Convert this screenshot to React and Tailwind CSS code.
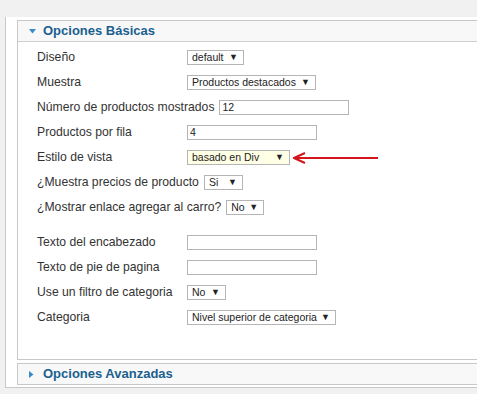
import React from "react";

const rows1 = [
  { label: "Diseño", type: "select", value: "default", w: "w-[57px]" },
  { label: "Muestra", type: "select", value: "Productos destacados", w: "w-[129px]" },
  { label: "Número de productos mostrados", type: "input", value: "12" },
  { label: "Productos por fila", type: "input", value: "4" },
  { label: "Estilo de vista", type: "select", value: "basado en Div", w: "w-[103px]", hl: true, arrow: true },
  { label: "¿Muestra precios de producto", type: "select", value: "Si", w: "w-[39px]" },
  { label: "¿Mostrar enlace agregar al carro?", type: "select", value: "No", w: "w-[38px]" },
];

const rows2 = [
  { label: "Texto del encabezado", type: "input", value: "" },
  { label: "Texto de pie de pagina", type: "input", value: "" },
  { label: "Use un filtro de categoria", type: "select", value: "No", w: "w-[39px]" },
  { label: "Categoria", type: "select", value: "Nivel superior de categoria", w: "w-[149px]" },
];

function Select({ value, w, hl }) {
  return (
    <div
      className={`${w} h-[15px] border border-[#b5b5b5] ${hl ? "bg-[#ffffe6]" : "bg-white"} flex items-center justify-between pl-[4px] pr-[5px] text-[10.5px] text-[#222] leading-none whitespace-nowrap`}
    >
      <span>{value}</span>
      <span className="text-[9px]">▼</span>
    </div>
  );
}

function Input({ value }) {
  return (
    <div className="w-[130px] h-[15px] border border-[#b5b5b5] bg-white flex items-center pl-[2px] text-[10.5px] text-[#222] leading-none">
      {value}
    </div>
  );
}

function Row({ row }) {
  return (
    <div className="h-[25px] flex items-center">
      <span className="min-w-[145px] mr-[5px] text-[12.2px] text-[#333] whitespace-nowrap">{row.label}</span>
      {row.type === "select" ? <Select {...row} /> : <Input value={row.value} />}
      {row.arrow && (
        <svg width="86" height="14" viewBox="0 0 86 14" className="ml-[3px]">
          <line x1="2" y1="7" x2="85" y2="7" stroke="#d2161c" strokeWidth="2" />
          <polyline points="12,2 1,7 12,12" fill="none" stroke="#d2161c" strokeWidth="2" />
        </svg>
      )}
    </div>
  );
}

function Header({ title, open }) {
  return (
    <div className="h-[20px] bg-[#f8f8f8] flex items-center pl-[11px]">
      {open ? (
        <svg width="7" height="5" viewBox="0 0 7 5" className="mr-[7px]">
          <polygon points="0,0 7,0 3.5,4.5" fill="#3a8cc6" />
        </svg>
      ) : (
        <svg width="5" height="7" viewBox="0 0 5 7" className="mr-[9px]">
          <polygon points="0,0 4.5,3.5 0,7" fill="#3a8cc6" />
        </svg>
      )}
      <span className="text-[13px] font-bold text-[#1b5f8f]">{title}</span>
    </div>
  );
}

export default function App() {
  return (
    <div
      className="w-[477px] h-[394px] bg-[#f1f1f1] overflow-hidden pt-[17px] pl-[5px]"
      style={{ fontFamily: '"Liberation Sans", Arial, sans-serif' }}
    >
      <div className="bg-white border-l border-b border-[#c8c8c8] pl-[11px] pt-[3px] pb-[2px]">
        <div className="border border-r-0 border-[#c8c8c8]">
          <div className="border-b border-[#cfcfcf]">
            <Header title="Opciones Básicas" open />
          </div>
          <div className="pl-[19px] pt-[3px] pb-[29px]">
            {rows1.map((r) => (
              <Row key={r.label} row={r} />
            ))}
            <div className="h-[10px]" />
            {rows2.map((r) => (
              <Row key={r.label} row={r} />
            ))}
          </div>
        </div>
        <div className="mt-[3px] border border-r-0 border-[#c8c8c8]">
          <Header title="Opciones Avanzadas" />
        </div>
      </div>
    </div>
  );
}
